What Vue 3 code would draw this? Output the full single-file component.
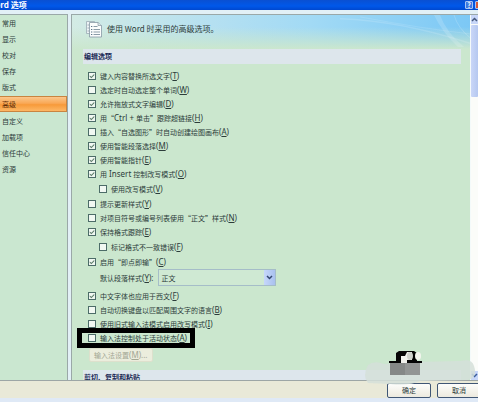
<script setup>
import { ref } from 'vue'

const pages = ['常用', '显示', '校对', '保存', '版式', '高级', '自定义', '加载项', '信任中心', '资源']
const current = ref('高级')

const editing = ref([
  { text: '键入内容替换所选文字', key: 'T', on: true },
  { text: '选定时自动选定整个单词', key: 'W', on: false },
  { text: '允许拖放式文字编辑', key: 'D', on: true },
  { text: '用“Ctrl + 单击”跟踪超链接', key: 'H', on: true },
  { text: '插入“自选图形”时自动创建绘图画布', key: 'A', on: false },
  { text: '使用智能段落选择', key: 'M', on: true },
  { text: '使用智能指针', key: 'E', on: true },
  { text: '用 Insert 控制改写模式', key: 'O', on: true },
  { text: '使用改写模式', key: 'V', on: false, sub: true },
  { text: '提示更新样式', key: 'Y', on: false },
  { text: '对项目符号或编号列表使用“正文”样式', key: 'N', on: false },
  { text: '保持格式跟踪', key: 'E', on: true },
  { text: '标记格式不一致错误', key: 'F', on: false, sub: true },
  { text: '启用“即点即输”', key: 'C', on: true },
])

const input = ref([
  { text: '中文字体也应用于西文', key: 'F', on: true },
  { text: '自动切换键盘以匹配周围文字的语言', key: 'B', on: false },
  { text: '使用旧式输入法模式启用改写模式', key: 'I', on: false },
  { text: '输入法控制处于活动状态', key: 'A', on: false, marked: true },
])

const style = ref('正文')

// Latin runs are set in their own face, one size up from the Chinese text.
const runs = (text) =>
  text
    .split(/([ A-Za-z+]+)/)
    .filter(Boolean)
    .map((t) => ({ t, latin: /^[ A-Za-z+]+$/.test(t) }))
</script>

<template>
  <div class="dialog" lang="zh-CN">
    <header class="titlebar">
      <h1>Word 选项</h1>
      <div class="window-buttons">
        <button type="button" class="help" aria-label="帮助">?</button>
        <button type="button" class="close" aria-label="关闭"></button>
      </div>
    </header>

    <div class="body">
      <nav class="sidebar">
        <button
          v-for="p in pages"
          :key="p"
          type="button"
          :class="{ active: p === current }"
          @click="current = p"
        >{{ p }}</button>
      </nav>

      <main class="pane">
        <div class="content">
          <div class="banner">
            <svg class="rays" viewBox="0 0 130 36" preserveAspectRatio="none" aria-hidden="true">
              <path d="M0 4 Q60 6 130 30" fill="none" stroke="#fff" stroke-opacity=".14" stroke-width="1.5" />
              <path d="M20 2 Q80 14 130 20" fill="none" stroke="#fff" stroke-opacity=".12" />
              <path d="M100 0 Q106 18 124 34 L118 34 Q102 18 94 0Z" fill="#fff" fill-opacity=".16" />
              <path d="M114 0 Q118 14 130 24" fill="none" stroke="#fff" stroke-opacity=".18" />
            </svg>
            <svg class="doc" viewBox="0 0 18 18" aria-hidden="true">
              <path d="M1.500 1.500h8v12h-8z" fill="#eef4f6" stroke="#9aabb4" stroke-width=".8" />
              <path d="M2.500 5h2M2.500 8h2M2.500 11h2" stroke="#8a9ca8" stroke-width=".8" />
              <path d="M4.500 2.500h8.500l3.500 3v11.500h-12z" fill="#fbfdfd" stroke="#8798a4" stroke-width=".8" />
              <path d="M13 2.500v3h3.500" fill="#dce6ea" stroke="#8798a4" stroke-width=".7" />
              <path d="M8.500 6.500h4M8.500 9.500h6.500M8.500 12h6.500M8.500 14.500h6.500" stroke="#7f929f" stroke-width=".9" />
              <path d="M6 6.500h1.300M6 9.500h1.300M6 12h1.300M6 14.500h1.300" stroke="#5d7488" stroke-width="1" />
            </svg>
            <p>使用 Word 时采用的高级选项。</p>
          </div>

          <section>
            <h2>编辑选项</h2>
            <div class="options">
              <label v-for="o in editing" :key="o.text" class="option" :class="{ sub: o.sub }">
                <input v-model="o.on" type="checkbox" />
                <span><span v-for="(r, i) in runs(o.text)" :key="i" :class="{ latin: r.latin }">{{ r.t }}</span><span class="latin">(<u>{{ o.key }}</u>)</span></span>
              </label>
              <div class="style-row">
                <label for="para-style">默认段落样式<span class="latin">(<u>Y</u>):</span></label>
                <div class="combo">
                  <select id="para-style" v-model="style">
                    <option>正文</option>
                  </select>
                  <span class="arrow" aria-hidden="true">
                    <svg viewBox="0 0 7 5"><path d="M1 1l2.500 2.500L6 1" fill="none" stroke="#33476f" stroke-width="1.500" /></svg>
                  </span>
                </div>
              </div>
              <label v-for="o in input" :key="o.text" class="option" :class="{ marked: o.marked }">
                <input v-model="o.on" type="checkbox" />
                <span>{{ o.text }}<span class="latin">(<u>{{ o.key }}</u>)</span></span>
              </label>
              <button type="button" class="ime" disabled>输入法设置<span class="latin">(<u>M</u>)...</span></button>
            </div>
          </section>

          <section>
            <h2>剪切、复制和粘贴</h2>
          </section>
        </div>

        <div class="scrollbar" aria-hidden="true">
          <span class="step"><svg viewBox="0 0 7 5"><path d="M1 4l2.500-2.500L6 4" fill="none" stroke="#44587c" stroke-width="1.500" /></svg></span>
          <span class="thumb"></span>
          <span class="track"></span>
          <span class="step"><svg viewBox="0 0 7 5"><path d="M1 1l2.500 2.500L6 1" fill="none" stroke="#3a5c9c" stroke-width="1.500" /></svg></span>
        </div>
      </main>
    </div>

    <footer class="actions">
      <button type="button">确定</button>
      <button type="button">取消</button>
    </footer>

    <svg class="stamp" viewBox="0 0 118 40" aria-hidden="true">
      <path d="M8 15Q14 10 24 14L56 12L100 11Q112 8 114 16Q118 28 108 30L60 31Q50 36 30 34L8 33Q2 26 8 15Z" fill="#d5dfd9" fill-opacity=".85" />
      <path d="M30 13h30v12H30z" fill="#858887" />
      <path d="M45 13h15v12H45z" fill="#929594" />
      <path d="M29 13v-2h7V3l3-2h15l3 2v8h5v2z" fill="#050505" />
      <path d="M41 6h4l2-4h5v8h-5v3h-6z" fill="#f1f2ed" />
      <ellipse cx="50" cy="6" rx="3" ry="4" fill="#cfd2cc" />
      <ellipse cx="58" cy="6" rx="3" ry="4" fill="#f3f6ef" />
    </svg>
  </div>
</template>

<style>
body {
  margin: 0;
  background: #dfe8f6;
}
</style>

<style scoped>
.dialog {
  position: relative;
  display: flex;
  flex-direction: column;
  box-sizing: border-box;
  height: 100vh;
  padding-bottom: 4px;
  overflow: hidden;
  background: #dfe9f6;
  color: #2c3c3a;
  font: 7px/14px "Noto Sans CJK SC", "Noto Sans", sans-serif;
}
button,
select {
  margin: 0;
  padding: 0;
  color: inherit;
  font: inherit;
}
u {
  text-underline-offset: 1px;
}
.latin {
  font-family: "Noto Sans", sans-serif;
  font-size: 8px;
  line-height: 1;
}
.titlebar {
  display: flex;
  flex: none;
  justify-content: space-between;
  height: 10px;
  background: linear-gradient(#0a50d2, #0058ea 60%, #0048d0);
}
h1 {
  margin: 0 0 0 -12px;
  color: #fff;
  font-size: 8px;
  line-height: 9px;
}
.window-buttons {
  display: flex;
  gap: 2px;
  margin: 1px -5px 1px 0;
}
.window-buttons button {
  box-sizing: border-box;
  width: 8px;
  border: 1px solid #a9c4f4;
  border-radius: 1px;
  background: #3d78df;
  color: #fff;
  font-weight: bold;
  line-height: 6px;
}
.window-buttons .close {
  background: #d4593b;
}
.body {
  display: flex;
  flex: 1;
  gap: 3px;
  min-height: 0;
  padding-top: 4px;
  border-bottom: 1px solid #9da6a6;
  background: #e2f0f6;
}
.sidebar {
  display: flex;
  flex: none;
  flex-direction: column;
  box-sizing: border-box;
  width: 68px;
  border-top: 1px solid #9aa8a8;
  border-right: 1px solid #9aa8a8;
  background: #cae7d0;
}
.sidebar button {
  height: 16px;
  padding-left: 2px;
  border: 0;
  background: none;
  line-height: 16px;
  text-align: left;
}
.sidebar .active {
  box-sizing: border-box;
  margin: 1px 0;
  border: solid #c98440;
  border-width: 1px 1px 1px 0;
  background: linear-gradient(#fbc78c, #f9a856 45%, #f79a3a 55%, #fdb765);
  color: #5c2c08;
  line-height: 14px;
}
.pane {
  display: flex;
  flex: 1;
  min-width: 0;
  border-top: 1px solid #9aa8a8;
  border-left: 1px solid #9aa8a8;
  background: #cbe7ce;
}
.content {
  flex: 1;
  min-width: 0;
  overflow: hidden;
}
.banner {
  position: relative;
  display: flex;
  align-items: center;
  gap: 4px;
  box-sizing: border-box;
  height: 34px;
  padding: 0 0 6px 13px;
  background:
    linear-gradient(to bottom, transparent 35%, #cbe7ce),
    linear-gradient(to right, #d3ebe4, #b5e0f1 35%, #a2daf5 60%, #7cc8f5);
}
.banner p {
  margin: 0;
  font-size: 8px;
}
.doc {
  width: 18px;
  height: 18px;
}
.rays {
  position: absolute;
  top: 0;
  right: 0;
  width: 130px;
  height: 34px;
}
section {
  padding: 0 9px 0 11px;
}
h2 {
  margin: 0;
  padding-left: 1px;
  background: #dde6ec;
  color: #1c2b57;
  font-size: 7px;
  line-height: 15px;
}
.options {
  display: flex;
  flex-direction: column;
  align-items: flex-start;
  padding: 5px 0 8px 5px;
}
.option {
  display: flex;
  align-items: center;
  gap: 4px;
  height: 14px;
  white-space: nowrap;
}
.option.sub {
  margin: 1px 0 1px 11px;
}
.option input {
  position: relative;
  box-sizing: border-box;
  width: 8px;
  height: 8px;
  margin: 0;
  border: 1px solid #4c6c68;
  background: #f1f8f2;
  appearance: none;
}
.option input:checked::before {
  position: absolute;
  inset: 0;
  background: #5d7d6b;
  clip-path: polygon(12% 40%, 40% 62%, 88% 14%, 88% 38%, 40% 88%, 12% 64%);
  content: "";
}
.option.marked {
  position: relative;
}
.option.marked::after {
  position: absolute;
  inset: -3px -8px;
  left: -11px;
  border: 5px solid #000;
  content: "";
}
.style-row {
  display: flex;
  align-items: center;
  gap: 5px;
  margin: 0 0 3px 12px;
}
.combo {
  position: relative;
  display: flex;
  width: 118px;
}
.combo select {
  box-sizing: border-box;
  width: 100%;
  height: 17px;
  padding-left: 2px;
  border: 1px solid #a5bdc8;
  border-radius: 0;
  background: #cfe9d3;
  appearance: none;
}
.arrow {
  position: absolute;
  inset: 1px 1px 1px auto;
  display: flex;
  align-items: center;
  justify-content: center;
  width: 11px;
  background: linear-gradient(to right, #c6d7fa, #a9c1ef);
  pointer-events: none;
}
.arrow svg,
.step svg {
  width: 7px;
  height: 5px;
}
.ime {
  box-sizing: border-box;
  height: 14px;
  margin: 3px 0 0 1px;
  padding: 0 4px;
  border: 1px solid #dde0cc;
  border-radius: 2px;
  background: #ebeddd;
  color: #a3a794;
  line-height: 12px;
}
.scrollbar {
  display: flex;
  flex: none;
  flex-direction: column;
  box-sizing: border-box;
  width: 8px;
  border-left: 1px solid #f4fafa;
  background: #fbfcf9;
}
.step {
  display: flex;
  align-items: center;
  justify-content: center;
  height: 9px;
  background: #c7d6f8;
}
.thumb {
  height: 72px;
  margin-top: 1px;
  border-radius: 1px;
  background: linear-gradient(to right, #cad7f8, #b5c8f0);
}
.track {
  flex: 1;
}
.actions {
  display: flex;
  flex: none;
  justify-content: flex-end;
  gap: 6px;
  margin-right: -3px;
  padding-top: 2px;
  background: #e9e9d8;
}
.actions button {
  box-sizing: border-box;
  width: 44px;
  height: 15px;
  border: 1px solid #3f5675;
  border-radius: 2px;
  background: linear-gradient(#fdfdfb, #eceadf);
  line-height: 13px;
}
.stamp {
  position: absolute;
  right: 0;
  bottom: 12px;
  width: 118px;
  height: 40px;
  pointer-events: none;
}
</style>
